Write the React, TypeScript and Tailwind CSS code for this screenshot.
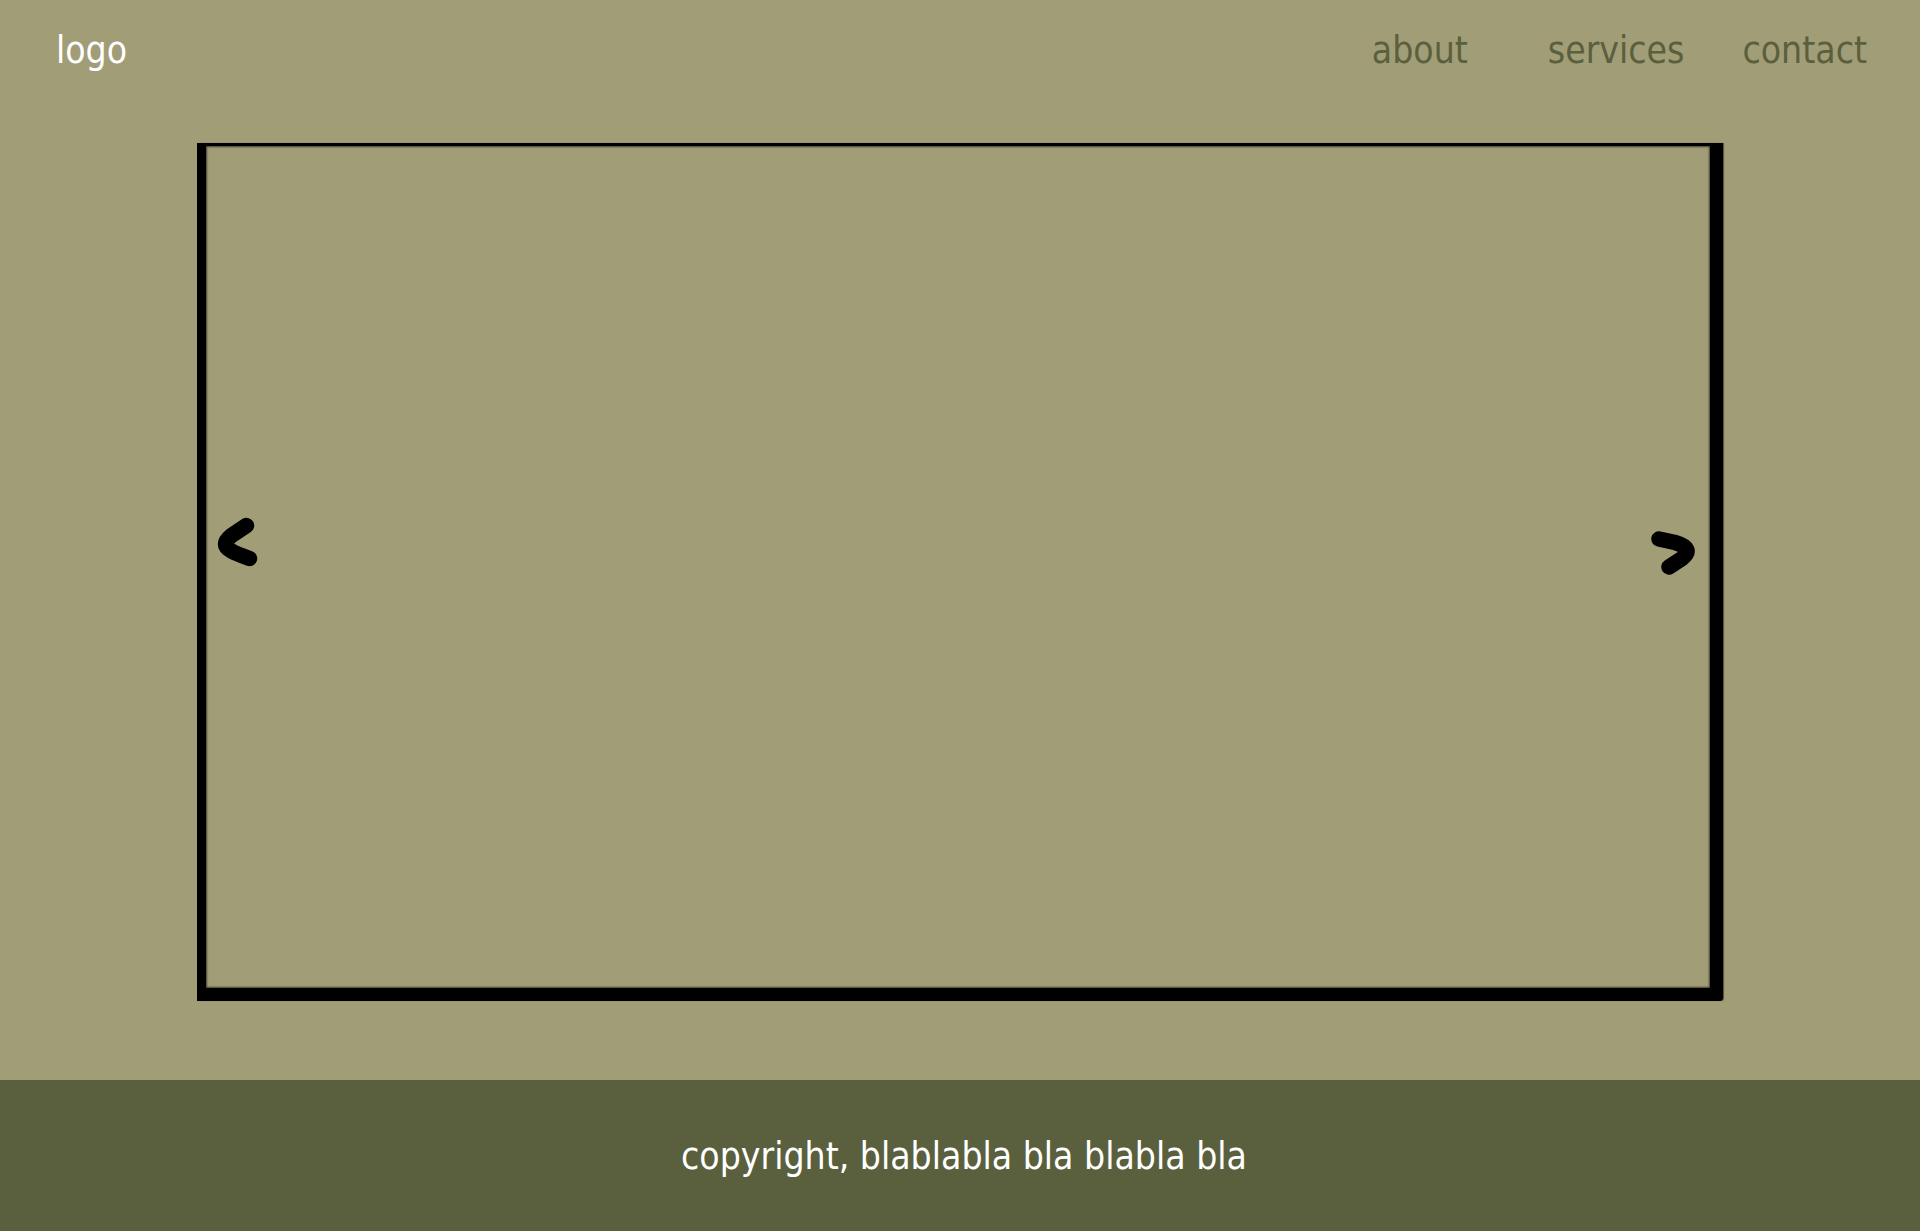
const links = [
  { label: 'about', spacing: 'mr-[80px]' },
  { label: 'services', spacing: 'mr-[58px]' },
  { label: 'contact', spacing: '' },
];

function Header() {
  return (
    <header className="flex items-center justify-between pt-[27px] pr-[53px] pb-[68px] pl-[56px]">
      <a href="#" className="text-white">logo</a>
      <nav aria-label="Main" className="flex text-[#5a603d]">
        {links.map((link) => (
          <a key={link.label} href={'#' + link.label} className={link.spacing}>
            {link.label}
          </a>
        ))}
      </nav>
    </header>
  );
}

function Carousel() {
  return (
    <section
      aria-label="Carousel"
      className="flex aspect-video items-center justify-between rounded-br-[3px] border-t-3 border-r-13 border-b-13 border-l-9 border-black pl-[11px] pr-[15px] shadow-[1px_0_1px_rgba(0,0,0,0.5),inset_0_0_2px_1px_rgba(0,0,0,0.6)]"
    >
      <button type="button" aria-label="Previous" className="-mt-[50px]">
        <svg width="41" height="50" viewBox="0 0 41 50" fill="none" stroke="black" strokeWidth="15.5" strokeLinecap="round">
          <path d="M29.5 8.5L14.5 18.5C6.5 25 6.5 29.5 14.5 34C18.5 36.5 24 38.5 32.5 41.5" />
        </svg>
      </button>
      <button type="button" aria-label="Next" className="-mt-[28px]">
        <svg width="45" height="46" viewBox="0 0 45 46" fill="none" stroke="black" strokeWidth="15.5" strokeLinecap="round">
          <path d="M9 9L25 12.5C39 16.5 40 22 32 28.5L19 37" />
        </svg>
      </button>
    </section>
  );
}

export default function App() {
  return (
    <div className="flex min-h-screen flex-col bg-[#a19d77] font-['DejaVu_Sans_Condensed','DejaVu_Sans',sans-serif] text-[37px] leading-[48px]">
      <Header />
      <main className="grow px-[197px] pb-[78px]">
        <Carousel />
      </main>
      <footer className="bg-[#5a603d] pt-[53px] pb-[50px] pl-2 text-center text-white">
        copyright, blablabla bla blabla bla
      </footer>
    </div>
  );
}
